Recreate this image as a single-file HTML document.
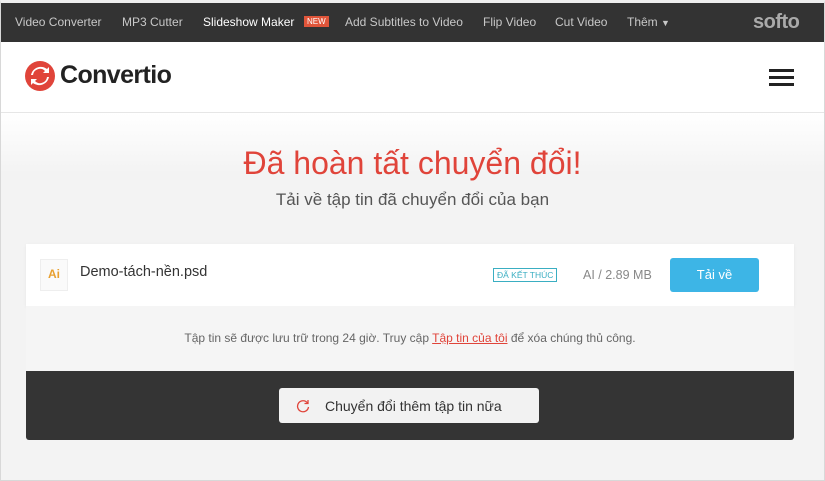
<!DOCTYPE html>
<html><head><meta charset="utf-8"><style>
*{margin:0;padding:0;box-sizing:border-box}
body{width:825px;height:481px;overflow:hidden;font-family:"Liberation Sans","DejaVu Sans",sans-serif;background:#f4f4f4;position:relative}
.top{position:absolute;left:0;top:3px;width:825px;height:39px;background:#333;color:#c8c8c8;font-size:12px}
.top span{position:absolute;top:12px;white-space:nowrap}
.hdr{position:absolute;left:0;top:42px;width:825px;height:71px;background:#fff;border-bottom:1px solid #e6e6e6}
.frame{position:absolute;left:0;top:0;width:825px;height:481px;border:1px solid #d8d8d8;border-top:3px solid #eee;pointer-events:none}
.main{position:absolute;left:0;top:113px;width:825px;height:368px;background:linear-gradient(#fff,#f3f3f3 60px)}
h1{position:absolute;left:0;width:825px;top:145px;text-align:center;font-weight:normal;color:#e0443a;font-size:32px}
.sub{position:absolute;left:0;width:825px;top:190px;text-align:center;color:#555;font-size:17px}
.card{position:absolute;left:26px;top:244px;width:768px;height:62px;background:#fff;box-shadow:0 1px 3px rgba(0,0,0,.06)}
.gray{position:absolute;left:26px;top:306px;width:768px;height:65px;background:#f5f5f5;text-align:center;font-size:12px;color:#666;padding-top:25px}
.dark{position:absolute;left:26px;top:371px;width:768px;height:69px;background:#343434;border-radius:0 0 3px 3px}
.btn{position:absolute;left:253px;top:17px;width:260px;height:35px;background:#f2f2f2;border-radius:3px;font-size:14px;color:#333;padding:10px 0 0 46px}
</style></head><body>
<div class="top">
<span style="left:15px">Video Converter</span>
<span style="left:122px">MP3 Cutter</span>
<span style="left:203px;color:#fff">Slideshow Maker</span>
<span style="left:304px;top:13px;background:#e0553a;color:#fff;font-size:8px;padding:1px 3px">NEW</span>
<span style="left:345px">Add Subtitles to Video</span>
<span style="left:483px">Flip Video</span>
<span style="left:555px">Cut Video</span>
<span style="left:627px">Thêm <span style="position:static;font-size:9px">▼</span></span>
<span style="left:753px;top:8px;font-size:20px;font-weight:bold;color:#aaa;letter-spacing:-.5px">softo</span>
</div>
<div class="hdr">
<svg style="position:absolute;left:25px;top:19px" width="30" height="30" viewBox="0 0 30 30"><circle cx="15" cy="15" r="15" fill="#e0443a"/><path d="M8 14a7 7 0 0 1 12-4l-2 2h6V6l-2 2A10 10 0 0 0 6 14z" fill="#fff"/><path d="M22 16a7 7 0 0 1-12 4l2-2H6v6l2-2a10 10 0 0 0 16-6z" fill="#fff"/></svg>
<div style="position:absolute;left:60px;top:19px;font-size:25px;font-weight:bold;color:#222;letter-spacing:-.6px">Convertio</div>
<div style="position:absolute;left:769px;top:27px;width:25px;height:3px;background:#222;box-shadow:0 7px 0 #222,0 14px 0 #222"></div>
</div>
<div class="main"></div>
<h1>Đã hoàn tất chuyển đổi!</h1>
<div class="sub">Tải về tập tin đã chuyển đổi của bạn</div>
<div class="card">
<div style="position:absolute;left:14px;top:15px;width:28px;height:32px;background:#fafafa;border:1px solid #eee;color:#e8a030;font-size:12px;font-weight:bold;text-align:center;padding-top:7px">Ai</div>
<div style="position:absolute;left:54px;top:20px;font-size:14.5px;color:#333">Demo-tách-nền.psd</div>
<div style="position:absolute;left:467px;top:24px;border:1px solid #3aaec2;color:#3aaec2;font-size:8.5px;padding:1px 3px">ĐÃ KẾT THÚC</div>
<div style="position:absolute;left:557px;top:24px;font-size:12.5px;color:#888">AI / 2.89 MB</div>
<div style="position:absolute;left:644px;top:14px;width:89px;height:34px;background:#3db5e6;border-radius:3px;color:#fff;font-size:13px;text-align:center;padding-top:9px">Tải về</div>
</div>
<div class="gray">Tập tin sẽ được lưu trữ trong 24 giờ. Truy cập <span style="color:#e0443a;text-decoration:underline">Tập tin của tôi</span> để xóa chúng thủ công.</div>
<div class="dark"><div class="btn"><svg style="position:absolute;left:17px;top:11px" width="14" height="14" viewBox="0 0 14 14"><path d="M11.5 4A5.5 5.5 0 1 0 12.5 8" fill="none" stroke="#e0443a" stroke-width="1.3"/><path d="M12 1v3.5H8.5" fill="none" stroke="#e0443a" stroke-width="1.3"/></svg>Chuyển đổi thêm tập tin nữa</div></div>
<div class="frame"></div>
</body></html>
